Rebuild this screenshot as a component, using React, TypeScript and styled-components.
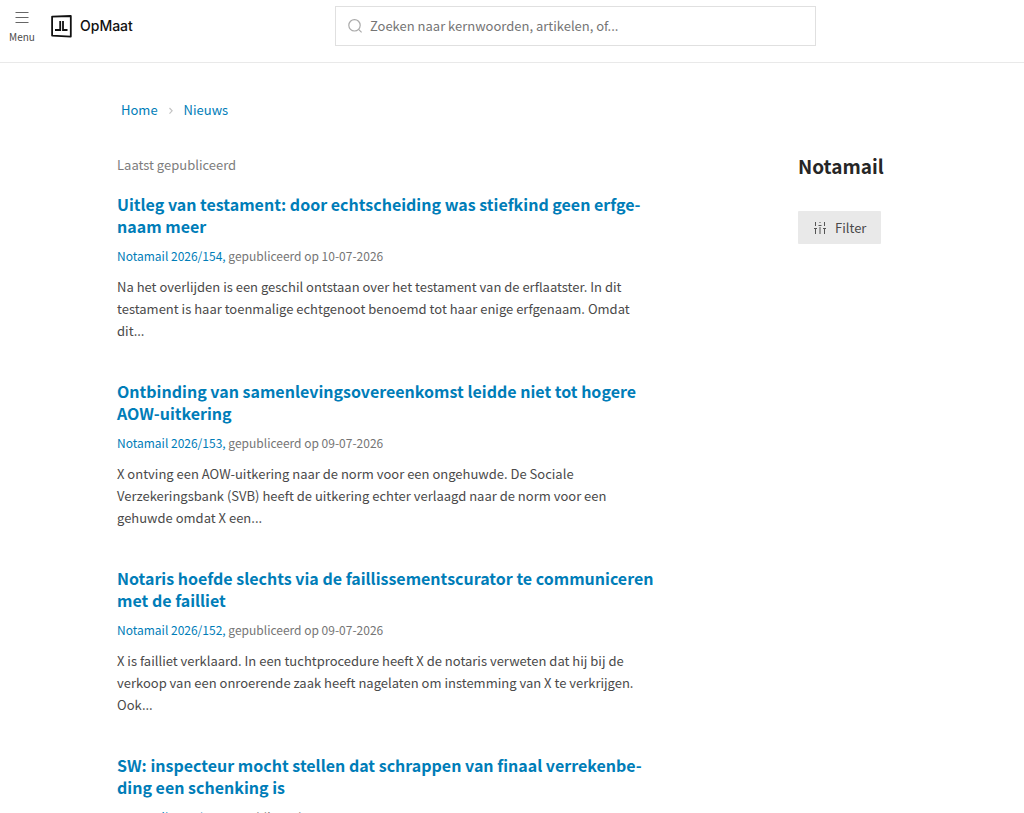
import React from "react";
import styled, { createGlobalStyle } from "styled-components";

const GlobalStyle = createGlobalStyle`
  *, *::before, *::after { box-sizing: border-box; }
  body {
    margin: 0;
    background: #fff;
    color: #4a4a4a;
    font-family: "Noto Sans CJK SC", "Noto Sans", sans-serif;
    font-size: 13px;
    line-height: 22px;
  }
  h1, h2, p, ol { margin: 0; padding: 0; }
  ol { list-style: none; }
`;

const Header = styled.header`
  display: grid;
  grid-template-columns: 335px minmax(0, 1fr) 208px;
  align-items: start;
  height: 63px;
  padding-top: 6px;
  border-bottom: 1px solid #e9e9e9;
`;

const Brand = styled.div`
  display: flex;
  align-items: flex-start;
  gap: 7px;
`;

const MenuButton = styled.button`
  display: flex;
  flex-direction: column;
  align-items: center;
  gap: 6px;
  width: 44px;
  padding: 5px 0 0;
  border: 0;
  background: none;
  color: #4a4a4a;
  font: 10px/16px "Noto Sans CJK SC", sans-serif;
  cursor: pointer;
`;

const Logo = styled.a`
  display: flex;
  align-items: center;
  gap: 8px;
  height: 40px;
  color: #111;
  font: 500 14px/20px Inter, sans-serif;
  text-decoration: none;
`;

const SearchBox = styled.label`
  display: flex;
  align-items: center;
  gap: 8px;
  height: 40px;
  padding: 0 12px;
  border: 1px solid #e0e0e0;
`;

const SearchInput = styled.input`
  flex: 1;
  min-width: 0;
  padding: 0;
  border: 0;
  outline: 0;
  background: none;
  color: #4a4a4a;
  font: inherit;
  &::placeholder { color: #757575; opacity: 1; }
`;

const Page = styled.div`
  padding: 36px 117px 0;
`;

const Breadcrumb = styled.nav`
  display: flex;
  align-items: center;
  gap: 10px;
  padding-left: 4px;
`;

const Link = styled.a`
  color: #007db8;
  text-decoration: none;
`;

const Columns = styled.div`
  display: grid;
  grid-template-columns: minmax(0, 1fr) 109px;
  gap: 141px;
  padding-top: 33px;
`;

const ListLabel = styled.p`
  color: #7d7d7d;
`;

const Articles = styled.ol`
  display: grid;
  gap: 38px;
  padding-top: 17px;
`;

const Title = styled.h2`
  font-size: 16px;
  line-height: 22px;
  font-weight: 700;
  hyphenate-character: "-";
`;

const Meta = styled.p`
  padding-top: 8px;
  color: #757575;
  font-size: 12px;
`;

const Summary = styled.p`
  padding-top: 9px;
`;

const Aside = styled.aside`
  display: flex;
  flex-direction: column;
  align-items: flex-start;
  gap: 33px;
`;

const AsideTitle = styled.h1`
  color: #262626;
  font-size: 19px;
  line-height: 24px;
  font-weight: 700;
`;

const FilterButton = styled.button`
  display: flex;
  align-items: center;
  gap: 8px;
  height: 33px;
  padding: 0 15px;
  border: 0;
  border-radius: 1px;
  background: #e9e9e9;
  color: #4a4a4a;
  font: inherit;
  cursor: pointer;
`;

type Article = { title: string; issue: string; date: string; summary?: string };

const articles: Article[] = [
  {
    title: "Uitleg van testament: door echtscheiding was stiefkind geen erfge\u00ADnaam meer",
    issue: "Notamail 2026/154",
    date: "10-07-2026",
    summary:
      "Na het overlijden is een geschil ontstaan over het testament van de erflaatster. In dit testament is haar toenmalige echtgenoot benoemd tot haar enige erfgenaam. Omdat dit...",
  },
  {
    title: "Ontbinding van samenlevingsovereenkomst leidde niet tot hogere AOW-uitkering",
    issue: "Notamail 2026/153",
    date: "09-07-2026",
    summary:
      "X ontving een AOW-uitkering naar de norm voor een ongehuwde. De Sociale Verzekeringsbank (SVB) heeft de uitkering echter verlaagd naar de norm voor een gehuwde omdat X een...",
  },
  {
    title: "Notaris hoefde slechts via de faillissementscurator te communiceren met de failliet",
    issue: "Notamail 2026/152",
    date: "09-07-2026",
    summary:
      "X is failliet verklaard. In een tuchtprocedure heeft X de notaris verweten dat hij bij de verkoop van een onroerende zaak heeft nagelaten om instemming van X te verkrijgen. Ook...",
  },
  {
    title: "SW: inspecteur mocht stellen dat schrappen van finaal verrekenbe\u00ADding een schenking is",
    issue: "Notamail 2026/151",
    date: "09-07-2026",
  },
];

export default function App() {
  return (
    <>
      <GlobalStyle />
      <Header>
        <Brand>
          <MenuButton type="button">
            <svg width="14" height="12" viewBox="0 0 14 12" stroke="#666" aria-hidden="true">
              <path d="M0.5 1.5h13M0.5 6.5h13M0.5 11.5h13" strokeWidth="1.2" />
            </svg>
            Menu
          </MenuButton>
          <Logo href="#">
            <svg width="21" height="23" viewBox="0 0 21 23" fill="none" stroke="#111" aria-hidden="true">
              <path d="M1.1 1.6 19.8 1V21.6L1.1 20.6Z" strokeWidth="1.8" strokeLinejoin="round" />
              <path d="M9.2 6v9H4M12 6v9h4.5" strokeWidth="1.8" />
            </svg>
            OpMaat
          </Logo>
        </Brand>
        <SearchBox>
          <svg width="14" height="14" viewBox="0 0 14 14" fill="none" stroke="#aaa" aria-hidden="true">
            <circle cx="6.5" cy="6.3" r="5.7" strokeWidth="1.2" />
            <path d="m10.6 10.4 3 3" strokeWidth="1.2" />
          </svg>
          <SearchInput
            type="text"
            aria-label="Zoeken"
            placeholder="Zoeken naar kernwoorden, artikelen, of..."
          />
        </SearchBox>
      </Header>
      <Page>
        <Breadcrumb aria-label="Kruimelpad">
          <Link href="#">Home</Link>
          <svg width="6" height="8" viewBox="0 0 6 8" fill="none" stroke="#c4c4c4" aria-hidden="true">
            <path d="m1.5 2 2.6 2.8-2.6 2.8" strokeWidth="1.2" />
          </svg>
          <Link href="#">Nieuws</Link>
        </Breadcrumb>
        <Columns>
          <main>
            <ListLabel>Laatst gepubliceerd</ListLabel>
            <Articles>
              {articles.map((a) => (
                <li key={a.issue}>
                  <Title>
                    <Link href="#">{a.title}</Link>
                  </Title>
                  <Meta>
                    <Link href="#">{a.issue},</Link> gepubliceerd op {a.date}
                  </Meta>
                  {a.summary && <Summary>{a.summary}</Summary>}
                </li>
              ))}
            </Articles>
          </main>
          <Aside>
            <AsideTitle>Notamail</AsideTitle>
            <FilterButton type="button">
              <svg width="14" height="12" viewBox="0 0 14 12" stroke="#555" aria-hidden="true">
                <path d="M2.5 0v4M2.5 7v5M7 0v1M7 5v7M11.5 0v4M11.5 7v5M1 6.5h3M5.5 3.5h3M10 6.5h3" />
              </svg>
              Filter
            </FilterButton>
          </Aside>
        </Columns>
      </Page>
    </>
  );
}
